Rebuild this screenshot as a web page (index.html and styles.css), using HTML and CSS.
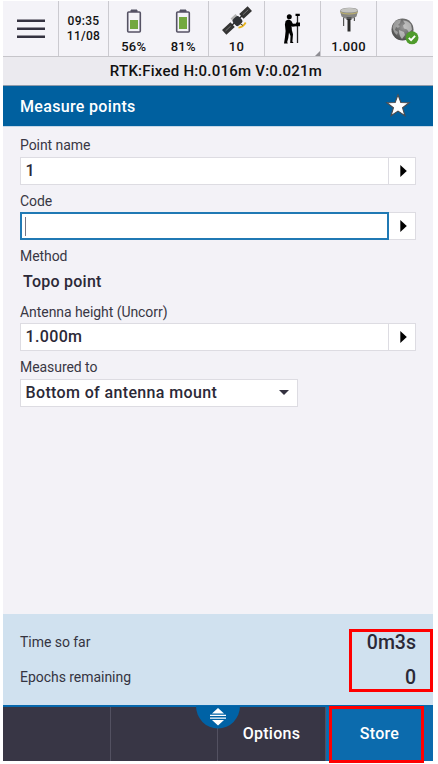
FILE: index.html
```html
<!DOCTYPE html>
<html lang="en">
<head>
<meta charset="utf-8">
<title>Measure points</title>
<link rel="stylesheet" href="styles.css">
</head>
<body>
<main class="app">
  <header class="status">
    <div class="cell"><svg class="menu" width="28" height="20" viewBox="0 0 28 20"><path d="M0 1.8h28M0 9.8h28M0 17.8h28" stroke="#343240" stroke-width="2.4"/></svg></div>
    <div class="cell clock"><span>09:35</span><span>11/08</span></div>
    <div class="cell batteries">
      <div class="stat">
        <svg width="16" height="24" viewBox="0 0 16 24"><path d="M5 3V1h6v2" fill="#555264" stroke="#555264"/><rect x="1.7" y="3" width="12.6" height="20" rx="1" fill="#f4f3f8" stroke="#555264" stroke-width="1.6"/><path d="M4 11h8v9H4z" fill="#73a83f"/></svg>
        <span>56%</span>
      </div>
      <div class="stat">
        <svg width="16" height="24" viewBox="0 0 16 24"><path d="M5 3V1h6v2" fill="#555264" stroke="#555264"/><rect x="1.7" y="3" width="12.6" height="20" rx="1" fill="#f4f3f8" stroke="#555264" stroke-width="1.6"/><path d="M4 8h8v12H4z" fill="#73a83f"/></svg>
        <span>81%</span>
      </div>
    </div>
    <div class="cell stat satellite">
      <svg width="30" height="30" viewBox="0 0 30 30">
        <g transform="translate(15 14.500) rotate(-43)">
          <path d="M-17.500-3.200h11.500v6.400h-11.500zM6-3.200h11.500v6.400H6z" fill="#343434"/>
          <path d="M-15.500-.2h7M8.500-.2h7" stroke="#777" stroke-width=".9"/>
          <path d="M-7 0H7" stroke="#292929" stroke-width="1.4"/>
          <rect x="-3.400" y="-5.800" width="6.800" height="4" fill="#b3b3b3"/>
          <rect x="-4.200" y="-3.500" width="8.400" height="8.500" rx="2.500" fill="#303236"/>
        </g>
        <path d="M16.500 21.600q4.500-.4 7.200-5.100" fill="none" stroke="#e9b51d" stroke-width="1.900"/>
        <path d="M18 17.500l3 2" stroke="#514a39"/>
      </svg>
      <span>10</span>
    </div>
    <div class="cell surveyor">
      <svg width="17" height="31" viewBox="0 0 17 31">
        <circle cx="5.300" cy="3.700" r="2.500" fill="#000"/>
        <path d="M1.600 8Q4.500 5 7.400 8l1.500 2.800 5-.2v2.300l-5.400.8-.9-.8.300 4.300 1.100 4-.6 7.200 1.200 1.600H6.200L6.500 23 5 19.500l-.7 5.500-1.100 4 .6 1.500H0L1 24l.6-6-.7-6.500z" fill="#000"/>
        <path d="M13.500 3v27" stroke="#222" stroke-width="1.300"/>
        <path d="M11.500 .8h4.300v2.200h-4.300zM12 9.500h4v3.700h-4z" fill="#000"/>
      </svg>
      <i class="corner"></i>
    </div>
    <div class="cell stat receiver">
      <svg width="22" height="28" viewBox="0 0 22 28">
        <path d="M2 4Q2 1 11 .8T20 4l-1.500 5.500Q15 12 11 12T3.500 9.500z" fill="#858583"/>
        <path d="M2.200 4Q3 1.200 11 1t8.800 3Q17 5.500 11 5.500T2.200 4z" fill="#c4c4c0"/>
        <path d="M2.500 5.500Q6 7 11 7t8.500-1.500" fill="none" stroke="#d3c365" stroke-width=".8"/>
        <path d="M8.500 10h5v3h-5z" fill="#555"/>
        <path d="M11 12v12.500" stroke="#2c2c2c" stroke-width="3"/>
        <path d="M5.600 10.500V19M16.400 10.500V14" stroke="#555" stroke-width="1.200"/>
      </svg>
      <span>1.000</span>
    </div>
    <div class="cell network">
      <svg width="28" height="27" viewBox="0 0 28 27">
        <defs><radialGradient id="globe" cx="55%" cy="40%" r="60%"><stop offset="0" stop-color="#999"/><stop offset="1" stop-color="#4e4e4e"/></radialGradient></defs>
        <circle cx="11.500" cy="11.500" r="11" fill="url(#globe)"/>
        <path d="M3.500 4Q6 1 10 1.500L9 5 7 7l2 1-2 2-2-1-1 3 3 2-1 3Q2 14 1.500 9z" fill="#d2d2d2" opacity=".5"/>
        <path d="M8 12l5 2 1 3-3 4Q8 18 8 12zM12 2.500q5 0 8 4l1 5-3 3-2-3-3-1-1-3 2-2z" fill="#ddd" opacity=".6"/>
        <circle cx="21" cy="19.800" r="6.500" fill="#4f9b2c"/>
        <path d="M17.800 19.800l2.300 2.300 4-4.300" fill="none" stroke="#fff" stroke-width="1.900"/>
      </svg>
    </div>
  </header>
  <div class="precision">RTK:Fixed H:0.016m V:0.021m</div>
  <div class="title">
    <h1>Measure points</h1>
    <svg width="26" height="26" viewBox="0 0 24 24"><path d="M12 1.600l2.600 7.100 7.700.2-6.100 4.700 2.200 7.400L12 16.700 5.600 21l2.200-7.400-6.100-4.700 7.700-.2z" fill="#fff" stroke="#4c4a4c" stroke-width="1"/></svg>
  </div>
  <section class="form">
    <div class="field">
      <label>Point name</label>
      <div class="entry"><div class="value">1</div><button class="more"><svg width="7" height="12" viewBox="0 0 7 12"><path d="M.3 0v12L6.800 6z"/></svg></button></div>
    </div>
    <div class="field">
      <label>Code</label>
      <div class="entry active"><div class="value"><i class="caret"></i></div><button class="more"><svg width="7" height="12" viewBox="0 0 7 12"><path d="M.3 0v12L6.800 6z"/></svg></button></div>
    </div>
    <div class="field">
      <label>Method</label>
      <div class="static">Topo point</div>
    </div>
    <div class="field">
      <label>Antenna height (Uncorr)</label>
      <div class="entry"><div class="value">1.000m</div><button class="more"><svg width="7" height="12" viewBox="0 0 7 12"><path d="M.3 0v12L6.800 6z"/></svg></button></div>
    </div>
    <div class="field">
      <label>Measured to</label>
      <div class="entry select"><div class="value">Bottom of antenna mount</div><svg width="10" height="5" viewBox="0 0 10 5"><path d="M0 0h10L5 5z" fill="#343240"/></svg></div>
    </div>
  </section>
  <section class="progress">
    <div class="row"><span>Time so far</span><b>0m3s</b></div>
    <div class="row"><span>Epochs remaining</span><b>0</b></div>
    <i class="mark readings"></i>
  </section>
  <footer class="actions">
    <div class="key"></div>
    <div class="key"></div>
    <div class="key">Options</div>
    <div class="key primary">Store</div>
    <svg class="handle" width="44" height="23" viewBox="0 0 44 23"><path d="M0 0a22 22.500 0 0 0 44 0z" fill="#0062a5"/><path d="M16 7.500L22 2l6 5.500zM16 14L22 19.500l6-5.500z" fill="#fff"/><path d="M14 9.300h16M14 12.200h16" stroke="#fff" stroke-width="1.200"/></svg>
    <i class="mark store"></i>
  </footer>
</main>
</body>
</html>
```
FILE: styles.css
```css
* { box-sizing: border-box; }
body {
  margin: 0;
  padding: 1px 5px 3px 3px;
  background: #fff;
  font-family: Roboto, sans-serif;
  font-weight: 500;
  color: #2b2937;
}
.app {
  width: 430px;
  height: 760px;
  display: flex;
  flex-direction: column;
  background: #f3f2f7;
}
svg { display: block; flex: none; }

.status {
  height: 56px;
  flex: none;
  display: grid;
  grid-template-columns: 56px 50px 100px 56px 56px 56px 1fr;
  border-bottom: 1px solid #c6c5ca;
  background: #f4f3f8;
  color: #111;
  font-size: 13px;
  line-height: 15px;
  letter-spacing: .3px;
}
.cell {
  position: relative;
  display: flex;
  align-items: center;
  justify-content: center;
  border-right: 1px solid #cbcad0;
}
.cell:last-child { border-right: 0; }
.clock { flex-direction: column; font-size: 12px; }
.stat { display: flex; flex-direction: column; align-items: center; justify-content: flex-end; }
.stat span { margin-bottom: 2px; }
.batteries { align-items: stretch; }
.batteries .stat { width: 50px; }
.batteries svg { margin-bottom: 6px; }
.satellite svg { margin-bottom: 3px; }
.receiver svg { margin-bottom: 4px; }
.surveyor { padding-right: 1px; }
.network { padding-top: 5px; }
.corner {
  position: absolute;
  right: 0;
  bottom: 0;
  border-left: 5px solid transparent;
  border-bottom: 5px solid #8e8d93;
}

.precision {
  height: 29px;
  flex: none;
  border-bottom: 1px solid #8e9bab;
  background: #ebeaef;
  color: #111;
  font-size: 15px;
  line-height: 28px;
  letter-spacing: .24px;
  text-align: center;
  padding-right: 4px;
}
.title {
  height: 41px;
  flex: none;
  display: flex;
  align-items: center;
  justify-content: space-between;
  padding: 0 22px 0 17px;
  border-bottom: 1px solid #c5d7e7;
  background: #00609f;
  color: #fff;
}
h1 { margin: 0; font-size: 16px; font-weight: 500; letter-spacing: .33px; }

.form { flex: 1; padding: 2px 17px 0; }
.field { height: 55.5px; width: 396px; }
label {
  display: block;
  height: 27.5px;
  padding-top: 4px;
  line-height: 24px;
  font-size: 14px;
  font-weight: 400;
  letter-spacing: -.06px;
  color: #393744;
}
.entry {
  height: 28px;
  display: flex;
  border: 1px solid #dddce2;
  background: #fff;
}
.value {
  flex: 1;
  padding-left: 4.5px;
  font-size: 16px;
  line-height: 25px;
  letter-spacing: .36px;
}
.more {
  width: 27px;
  padding: 0 0 0 2px;
  border: 0;
  border-left: 1px solid #dddce2;
  background: #fff;
  display: flex;
  align-items: center;
  justify-content: center;
}
.active .value {
  margin: -1px 0 -1px -1px;
  border: 2px solid #2079b4;
  padding: 3px 0 3px 3px;
}
.active .more { border-left: 0; width: 26px; }
.caret { display: block; width: 1px; height: 19px; background: #777584; }
.static { padding-left: 3px; font-size: 16px; line-height: 27px; letter-spacing: .25px; }
.select { width: 278px; align-items: center; padding-right: 8px; }

.progress {
  position: relative;
  height: 91px;
  flex: none;
  padding: 10.5px 17px 0;
  background: #d0e1ef;
}
.row {
  height: 35px;
  display: flex;
  align-items: center;
  justify-content: space-between;
  font-size: 14px;
  font-weight: 400;
  letter-spacing: -.04px;
  color: #353441;
}
.row b { font-size: 19.5px; font-weight: 500; letter-spacing: 0; color: #2b2937; }
.actions {
  position: relative;
  height: 56px;
  flex: none;
  display: grid;
  grid-template-columns: 108px 107px 108px 1fr;
  border-top: 2px solid #0768ad;
  background: #383645;
}
.key {
  border-right: 1px solid #535161;
  color: #fff;
  font-size: 16px;
  line-height: 53px;
  letter-spacing: .3px;
  text-align: center;
}
.primary { border: 0; background: #0c6bad; }
.handle { position: absolute; left: 193px; top: -1px; }
.mark { position: absolute; border: 3px solid #f00; }
.readings { left: 346px; top: 15px; width: 84px; height: 63px; }
.store { left: 326px; top: -1px; width: 95px; height: 57px; }
```
